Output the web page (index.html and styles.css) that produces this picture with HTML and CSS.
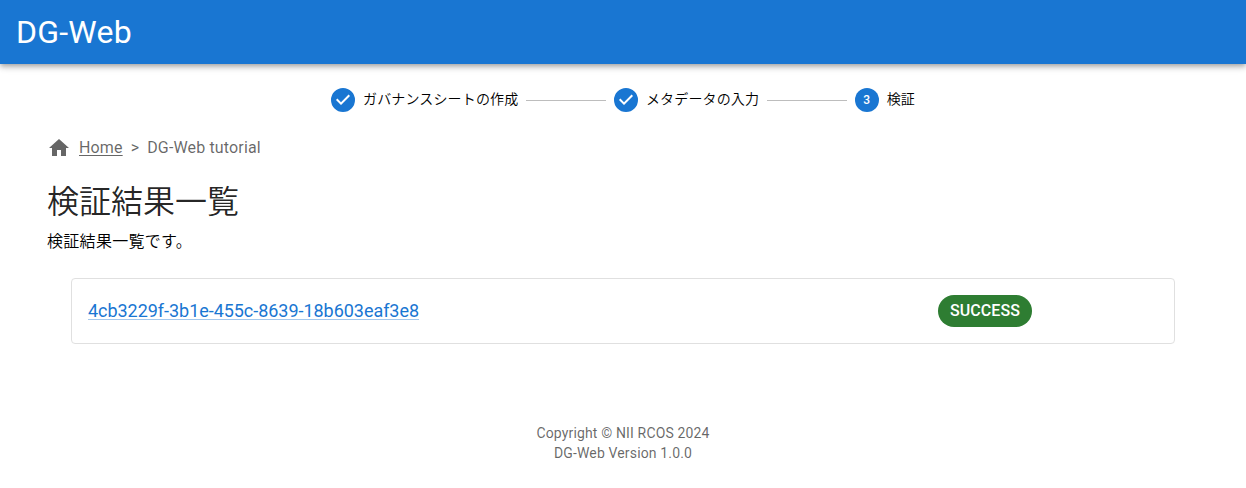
FILE: index.html
```html
<!DOCTYPE html>
<html lang="ja">
<head>
<meta charset="utf-8">
<title>DG-Web</title>
<link rel="stylesheet" href="styles.css">
</head>
<body>
<header class="appbar"><span class="brand">DG-Web</span></header>
<ol class="stepper">
  <li class="step"><svg class="step-icon" viewBox="0 0 24 24"><path d="M12 0a12 12 0 1 0 0 24 12 12 0 0 0 0-24zm-2 17l-5-5 1.4-1.4 3.6 3.6 7.6-7.6L19 8l-9 9z"/></svg><span class="step-label">ガバナンスシートの作成</span></li>
  <li class="connector"></li>
  <li class="step"><svg class="step-icon" viewBox="0 0 24 24"><path d="M12 0a12 12 0 1 0 0 24 12 12 0 0 0 0-24zm-2 17l-5-5 1.4-1.4 3.6 3.6 7.6-7.6L19 8l-9 9z"/></svg><span class="step-label">メタデータの入力</span></li>
  <li class="connector"></li>
  <li class="step"><span class="step-number">3</span><span class="step-label">検証</span></li>
</ol>
<main class="content">
  <nav class="breadcrumbs">
    <svg class="home-icon" viewBox="0 0 24 24"><path d="M10 20v-6h4v6h5v-8h3L12 3 2 12h3v8z"/></svg>
    <a class="home-link" href="#">Home</a><span class="separator">&gt;</span><span>DG-Web tutorial</span>
  </nav>
  <h1 class="title">検証結果一覧</h1>
  <p class="description">検証結果一覧です。</p>
  <section class="result">
    <a class="result-link" href="#">4cb3229f-3b1e-455c-8639-18b603eaf3e8</a>
    <span class="chip">SUCCESS</span>
  </section>
</main>
<footer class="footer"><div>Copyright © NII RCOS 2024</div><div>DG-Web Version 1.0.0</div></footer>
</body>
</html>
```
FILE: styles.css
```css
* { box-sizing: border-box; }
body {
  margin: 0;
  background: #fff;
  color: rgba(0, 0, 0, 0.87);
  font-family: Roboto, "Noto Sans CJK JP", sans-serif;
  font-size: 16px;
}
.appbar {
  display: flex;
  align-items: center;
  height: 64px;
  padding: 0 16px;
  background: #1976d2;
  color: #fff;
  box-shadow: 0 2px 4px -1px rgba(0,0,0,.2), 0 4px 5px rgba(0,0,0,.14), 0 1px 10px rgba(0,0,0,.12);
}
.brand { font-size: 32px; line-height: 40px; letter-spacing: 0.235px; }
.stepper {
  display: flex;
  align-items: center;
  width: 584px;
  height: 24px;
  margin: 24px 0 0 331px;
  padding: 0;
  list-style: none;
}
.step { display: flex; align-items: center; flex: none; }
.step-icon { width: 24px; height: 24px; margin-right: 8px; fill: #1976d2; }
.step-number {
  width: 24px;
  height: 24px;
  margin-right: 8px;
  border-radius: 50%;
  background: #1976d2;
  color: #fff;
  font-size: 12px;
  font-weight: 500;
  line-height: 24px;
  text-align: center;
}
.step-label {
  padding-bottom: 2px;
  color: #000;
  font-size: 14px;
  font-weight: 350;
  line-height: 20px;
  letter-spacing: 0.15px;
  white-space: nowrap;
}
.connector { flex: 1; height: 1px; margin: 0 8px; background: #bdbdbd; }
.content { padding: 24px 47px 0; }
.breadcrumbs {
  display: flex;
  align-items: center;
  height: 24px;
  color: rgba(0, 0, 0, 0.6);
  line-height: 24px;
  letter-spacing: 0.15px;
}
.home-icon { width: 24px; height: 24px; margin-right: 8px; fill: #666; }
.home-link { color: inherit; text-underline-offset: 2px; }
.separator { margin: 0 8px; }
.title { margin: 22px 0 0; font-size: 32px; font-weight: 350; line-height: 40px; }
.description {
  margin: 8px 0 0;
  color: #000;
  font-size: 16px;
  font-weight: 350;
  line-height: 24px;
  letter-spacing: 0.3px;
}
.result {
  display: flex;
  align-items: center;
  height: 66px;
  margin: 24px 24px 0;
  padding: 0 16px;
  border: 1px solid #e0e0e0;
  border-radius: 4px;
}
.result-link {
  width: 850px;
  color: #1976d2;
  font-size: 18px;
  line-height: 24px;
  letter-spacing: -0.04px;
  text-decoration-color: rgba(25, 118, 210, 0.4);
  text-decoration-thickness: 1px;
  text-underline-offset: 2px;
}
.chip {
  height: 32px;
  padding: 0 12px;
  border-radius: 16px;
  background: #2e7d32;
  color: #fff;
  font-weight: 500;
  line-height: 32px;
  letter-spacing: 0.06px;
}
.footer {
  margin-top: 79px;
  color: rgba(0, 0, 0, 0.6);
  font-size: 14px;
  line-height: 20px;
  letter-spacing: 0.15px;
  text-align: center;
}
```
